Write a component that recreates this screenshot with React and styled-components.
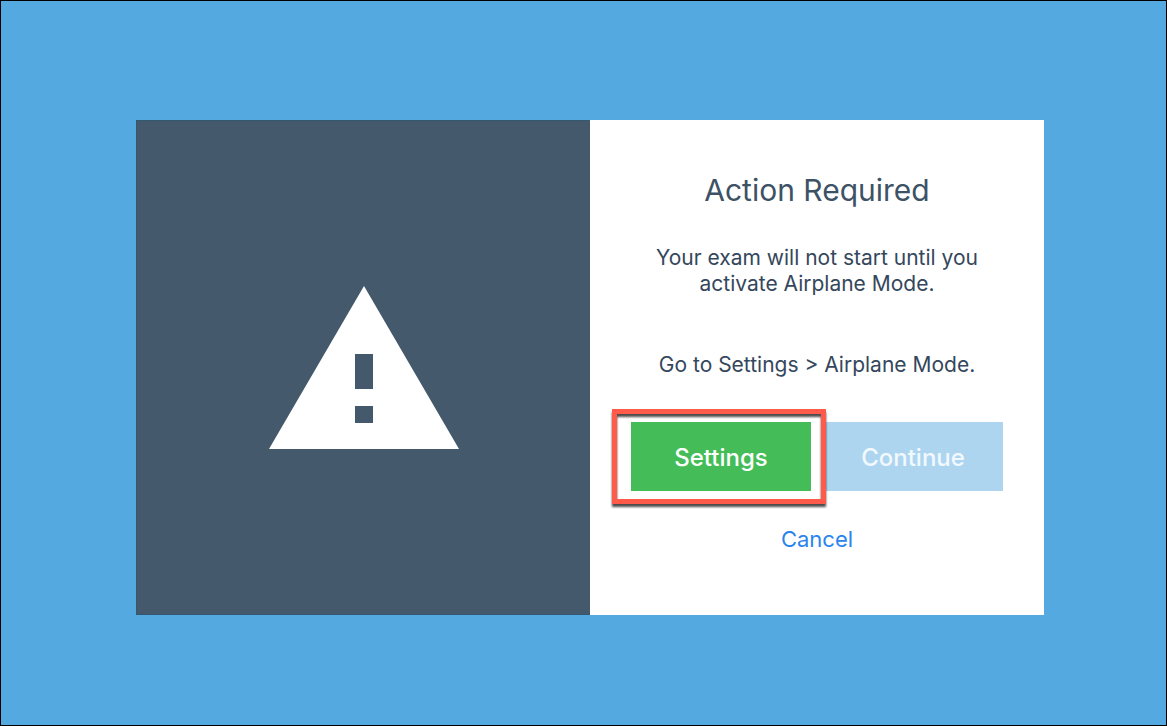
import React from 'react'
import styled, { createGlobalStyle } from 'styled-components'

const GlobalStyle = createGlobalStyle`
  * {
    box-sizing: border-box;
  }
  body {
    margin: 0;
    background: #53a9e0;
    font-family: Inter, Roboto, sans-serif;
  }
`

const StyledPage = styled.main`
  display: flex;
  align-items: flex-start;
  min-height: 100vh;
  padding: 119px 122px 110px 135px;
  border: 1px solid #000;
`

const StyledCard = styled.section`
  display: grid;
  flex: 1;
  grid-template-columns: 1fr 1fr;
  background: #fff;
`

const StyledAside = styled.div`
  display: flex;
  align-items: center;
  justify-content: center;
  background: #44596b;
  border: 1px solid #34586f;
  border-right: 0;
  svg {
    width: 190px;
    height: 163px;
  }
`

const StyledContent = styled.div`
  display: flex;
  flex-direction: column;
  align-items: center;
  padding: 50px 24px 59px;
  color: #34475c;
  text-align: center;
`

const StyledTitle = styled.h1`
  margin: 0 0 35px;
  color: #3d5265;
  font-size: 30px;
  font-weight: 400;
  line-height: 40px;
`

const StyledText = styled.p`
  max-width: 350px;
  margin: 0;
  font-size: 21px;
  line-height: 26px;
  & + & {
    margin-top: 55px;
  }
`

const StyledActions = styled.div`
  display: flex;
  gap: 12px;
  margin: 44px 0 31px;
`

const StyledHighlighted = styled.div`
  position: relative;
`

const StyledHighlight = styled.span`
  position: absolute;
  z-index: 1;
  top: -13px;
  right: -15px;
  bottom: -13px;
  left: -19px;
  border: 5px solid #ff5a4a;
  filter: drop-shadow(0 3px 1px rgba(0, 0, 0, 0.7));
  pointer-events: none;
`

const StyledButton = styled.button`
  width: 180px;
  height: 69px;
  padding: 2px 0 0;
  border: 0;
  background: ${({ $primary }) => ($primary ? '#44bd58' : '#aed5f0')};
  color: ${({ $primary }) => ($primary ? '#fff' : '#f1f9ff')};
  font-family: inherit;
  font-size: 24px;
  font-weight: 500;
  line-height: 32px;
`

const StyledCancel = styled.button`
  padding: 0;
  border: 0;
  background: transparent;
  color: #2a84ee;
  font-family: inherit;
  font-size: 22px;
  line-height: 34px;
  cursor: pointer;
`

function App() {
  return (
    <>
      <GlobalStyle />
      <StyledPage>
        <StyledCard>
          <StyledAside>
            <svg viewBox="0 0 190 163" aria-hidden="true">
              <path
                fill="#fff"
                fillRule="evenodd"
                d="M95 0L190 163H0ZM86 68V103H104V68ZM86 120V137H104V120Z"
              />
            </svg>
          </StyledAside>
          <StyledContent>
            <StyledTitle>Action Required</StyledTitle>
            <StyledText>Your exam will not start until you activate Airplane Mode.</StyledText>
            <StyledText>Go to Settings &gt; Airplane Mode.</StyledText>
            <StyledActions>
              <StyledHighlighted>
                <StyledButton type="button" $primary>Settings</StyledButton>
                <StyledHighlight />
              </StyledHighlighted>
              <StyledButton type="button" disabled>Continue</StyledButton>
            </StyledActions>
            <StyledCancel type="button">Cancel</StyledCancel>
          </StyledContent>
        </StyledCard>
      </StyledPage>
    </>
  )
}

export default App
